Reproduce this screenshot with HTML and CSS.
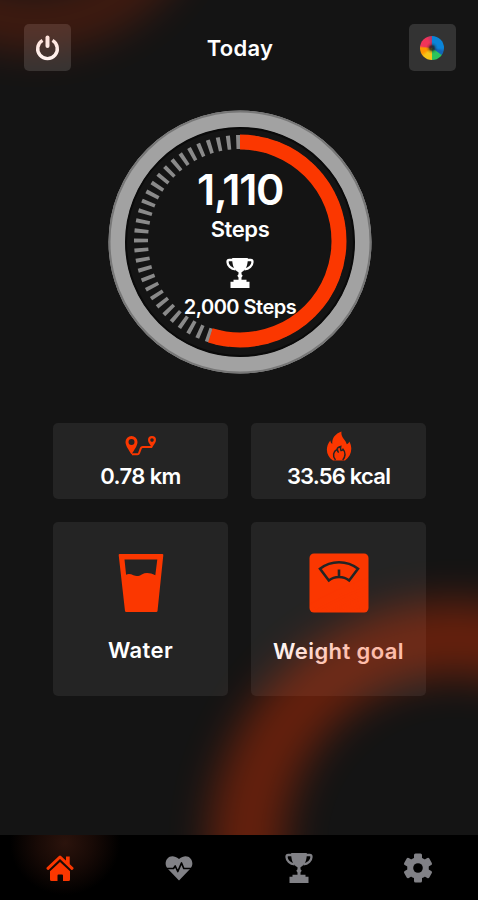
FILE: index.html
```html
<!DOCTYPE html>
<html lang="en">
    <head>
        <meta charset="UTF-8">
        <meta name="viewport" content="width=device-width, initial-scale=1.0">
        <title>Step Counter</title>
        <link rel="stylesheet" href="styles.css">
    </head>

    <body>
        <div class="app">
            <header class="header">
                <button class="icon-btn" type="button" aria-label="Power">
                    <svg width="26" height="26" viewBox="0 0 26 26" fill="none" stroke="#fff" stroke-width="3.4">
                        <path d="M7.500 5.400a9.800 9.800 0 1 0 10 0"/>
                        <path stroke-width="4" stroke-linecap="round" d="M12.500 2.500v8.500"/>
                    </svg>
                </button>
                <h1 class="title">Today</h1>
                <button class="icon-btn" type="button" aria-label="Theme">
                    <span class="wheel"></span>
                </button>
            </header>

            <section class="dial">
                <svg class="dial-ring" viewBox="0 0 264 264" fill="none">
                    <circle cx="132" cy="132" r="123" stroke="#a2a2a2" stroke-width="17"/>
                    <circle cx="132" cy="132" r="130.5" stroke="#777" stroke-width="2"/>
                    <circle cx="132" cy="132" r="114" stroke="#0a0a0a" stroke-width="2"/>
                    <circle class="ticks" cx="132" cy="131" r="99" pathLength="65"/>
                    <circle class="progress" cx="132" cy="131" r="99" pathLength="360"/>
                </svg>
                <div class="dial-text">
                    <p class="count">1,110</p>
                    <p class="unit">Steps</p>
                    <svg class="cup" width="28" height="31" viewBox="0 0 28 31"><use href="#trophy"/></svg>
                    <p class="target">2,000 Steps</p>
                </div>
            </section>

            <main class="cards">
                <div class="card small">
                    <svg width="32" height="22" viewBox="0 0 32 22" fill="none">
                        <path d="M7 19.2h5.4q1.3 0 1.7-1.2l1.7-4.6q.5-1.4 2-1.4H27" stroke="#fb3700" stroke-width="2"/>
                        <path fill="#fb3700" fill-rule="evenodd" d="M6.5 1a6 6 0 0 1 6 6c0 4-3.800 8.500-6 12.500C4.300 15.500.5 11 .5 7a6 6 0 0 1 6-6zm0 3.100a3 3 0 1 0 0 6 3 3 0 0 0 0-6zM27 1a4 4 0 0 1 4 4c0 2.600-2.500 5-4 8-1.500-3-4-5.400-4-8a4 4 0 0 1 4-4zm0 2.300a1.800 1.800 0 1 0 0 3.600 1.800 1.800 0 0 0 0-3.600z"/>
                    </svg>
                    <p>0.78 km</p>
                </div>
                <div class="card small kcal">
                    <svg width="26" height="30" viewBox="0 0 26 30">
                        <path fill="#fb3700" d="M15.500.500C8.500 3 5.800 8 6.300 13 5 12.300 4.500 11 4.300 9.500-1.500 17 .5 25 7 29.500h12c6.500-4.500 8-12.500 4.300-19-.5 1.300-1.300 2.300-2.500 2.700C20 9 14.500 6.500 15.500.500z"/>
                        <path fill="none" stroke="#242424" stroke-width="1.500" d="M9.500 29c-3.500-4-2-9 1.500-10.500.3-1.800 1.800-2.700 3.700-3-.5 1.700 0 3 .3 4 1 0 1.500-.4 2-1.200 3 3 2.500 7.700-.3 10.700M11.500 18.500c0 1.500.5 2.500 1.200 3"/>
                    </svg>
                    <p>33.56 kcal</p>
                </div>
                <div class="card big water">
                    <svg width="46" height="60" viewBox="0 0 46 60">
                        <path fill="#fb3700" fill-rule="evenodd" d="M1.700 1h42.600q1.200 0 1 1.200l-5.800 55.800q-.2 1-1.200 1H8.200q-1 0-1.200-1L.7 2.200Q.5 1 1.700 1zM6.500 6.500l1.600 15.300c2.400-1.300 5-.5 7.300.5 3.300 1.200 5.800.7 8.300-.9 4.500-2.300 8.600-1.500 13.600.9L39.300 6.500z"/>
                    </svg>
                    <p>Water</p>
                </div>
                <div class="card big weight">
                    <svg width="60" height="60" viewBox="0 0 60 60">
                        <rect x=".5" y=".5" width="59" height="59" rx="4.500" fill="#fb3700"/>
                        <path fill="none" stroke="#242424" stroke-width="2.600" d="M11 15.800C22 7 38 7 49 15.800l-8.800 11.700c-5.800-4.700-14.600-4.700-20.400 0zM30 16.500V24"/>
                    </svg>
                    <p>Weight goal</p>
                </div>
            </main>

            <div class="glow glow-top"></div>
            <div class="glow glow-bottom"></div>

            <nav class="nav">
                <a class="nav-item active">
                    <svg width="28" height="28" viewBox="0 0 28 28">
                        <path fill="none" stroke="#fb3700" stroke-width="3" stroke-linecap="round" stroke-linejoin="round" d="M2 14.300 14 3l12 11.300"/>
                        <path fill="#fb3700" d="M20 2.500h3.700V11L20 7.500zM14 8l10 9.300v8.200q0 1.500-1.500 1.500H17v-5.500q0-1-1-1h-3.500q-1 0-1 1V27H5.500Q4 27 4 25.500v-8.200z"/>
                    </svg>
                </a>
                <a class="nav-item">
                    <svg width="28" height="26" viewBox="0 0 28 26">
                        <path fill="#818186" d="M14 25.500 2.500 13.500C-3 7 4.500-4 14 4c9.500-8 17 3 11.500 9.500z"/>
                        <path fill="none" stroke="#000" stroke-width="1.700" stroke-linejoin="round" d="M0 13.500h8.500l1.700-2.500 2.600 5.500L16.500 8l2.300 5.500H28"/>
                    </svg>
                </a>
                <a class="nav-item">
                    <svg width="28" height="31" viewBox="0 0 28 31">
                        <g id="trophy" fill="currentColor">
                            <path fill="none" stroke="currentColor" stroke-width="2.300" d="M7.500 3H3.200Q1.500 3 1.500 5c0 3.500 3.500 7 8 7.300M20.500 3h4.300q1.700 0 1.700 2c0 3.500-3.500 7-8 7.300"/>
                            <path d="M6.200 1h15.600c.2 7-1.800 12-6.300 14.300v2l1.200 1.500-1.200 1.700v2.200h5v2H23.500V31h-19v-6.300h3v-2h5v-2.200l-1.200-1.700 1.200-1.500v-2C8 13 6 8 6.200 1z"/>
                        </g>
                    </svg>
                </a>
                <a class="nav-item">
                    <svg width="30" height="30" viewBox="0 0 30 30">
                        <g fill="#818186">
                            <rect x="11" y=".5" width="8" height="29" rx="1.500"/>
                            <rect x="11" y=".5" width="8" height="29" rx="1.500" transform="rotate(60 15 15)"/>
                            <rect x="11" y=".5" width="8" height="29" rx="1.500" transform="rotate(120 15 15)"/>
                            <circle cx="15" cy="15" r="10.800"/>
                        </g>
                        <circle cx="15" cy="15" r="4.800" fill="#000"/>
                    </svg>
                </a>
            </nav>
        </div>
    </body>
</html>
```
FILE: styles.css
```css
* {
    margin: 0;
    padding: 0;
    box-sizing: border-box;
}
body {
    background-color: #141414;
    color: white;
    font-family: Inter, "Liberation Sans", sans-serif;
    font-weight: 600;
}
.app {
    position: relative;
    width: 478px;
    height: 900px;
    margin: 0 auto;
    overflow: hidden;
    display: flex;
    flex-direction: column;
    background-color: #141414;
}
.header {
    display: flex;
    justify-content: space-between;
    align-items: center;
    padding: 24px 22px 0 24px;
}
.icon-btn {
    width: 47px;
    height: 47px;
    display: flex;
    align-items: center;
    justify-content: center;
    border: none;
    border-radius: 5px;
    background-color: #333;
}
.title {
    padding-top: 2px;
    font-size: 22px;
    font-weight: 600;
    line-height: 45px;
    letter-spacing: 0.3px;
}
.wheel {
    width: 24px;
    height: 24px;
    border-radius: 50%;
    background:
        radial-gradient(circle, #222c 0 2px, #2223 4px, transparent 6px),
        conic-gradient(#0a84d8 0 25%, #1266b8 30% 34%, #2cc45c 36% 50%, #f5c518 50% 62%, #ff9500 68% 75%, #f0345a 78% 92%, #b03a6c 100%);
}

/* step dial */
.dial {
    display: grid;
    width: 264px;
    height: 264px;
    margin: 39px 0 0 108px;
}
.dial-ring, .dial-text {
    grid-area: 1 / 1;
}
.ticks {
    stroke: #8a8a8a;
    stroke-width: 14;
    stroke-dasharray: 0.4 0.6;
    stroke-dashoffset: 0.4;
    transform: rotate(-90deg);
    transform-origin: 132px 131px;
}
.progress {
    stroke: #fb3700;
    stroke-width: 15;
    stroke-dasharray: 197.5 162.5;
    transform: rotate(-90deg);
    transform-origin: 132px 131px;
}
.dial-text {
    z-index: 1;
    display: flex;
    flex-direction: column;
    align-items: center;
    padding-top: 54px;
}
.count {
    font-size: 43px;
    line-height: 50px;
    letter-spacing: -1.4px;
}
.unit {
    font-size: 22px;
    line-height: 30px;
    letter-spacing: -0.4px;
}
.cup {
    margin: 13px 0 4px;
    color: white;
}
.target {
    font-size: 20px;
    line-height: 30px;
    letter-spacing: -0.5px;
}

/* stat cards */
.cards {
    display: grid;
    grid-template-columns: 175px 175px;
    grid-template-rows: 76px 174px;
    gap: 23px;
    margin: 49px 0 0 53px;
}
.card {
    display: flex;
    flex-direction: column;
    align-items: center;
    border-radius: 5px;
    background-color: #242424;
    font-size: 22px;
    line-height: 28px;
}
.small {
    padding-top: 12px;
    letter-spacing: -0.6px;
}
.small p {
    margin-top: 5px;
}
.kcal {
    padding-top: 8px;
    letter-spacing: -0.8px;
}
.kcal p {
    margin-top: 1px;
}
.big {
    padding-top: 31px;
    letter-spacing: 0.4px;
}
.big p {
    margin-top: 23px;
}
.weight p {
    margin-top: 24px;
}

/* blurred rings lying over the screen */
.glow {
    position: absolute;
    border-style: solid;
    border-color: #fb3700;
    border-radius: 50%;
    pointer-events: none;
}
.glow-top {
    left: -145px;
    top: -308px;
    width: 360px;
    height: 360px;
    border-width: 58px;
    opacity: 0.19;
    filter: blur(19px);
}
.glow-bottom {
    left: 210px;
    top: 601px;
    width: 490px;
    height: 490px;
    border-width: 74px;
    opacity: 0.35;
    filter: blur(20px);
}

.nav {
    position: relative;
    z-index: 2;
    display: grid;
    grid-template-columns: repeat(4, 1fr);
    height: 65px;
    margin-top: auto;
    background-color: black;
}
.nav-item {
    display: flex;
    align-items: center;
    justify-content: center;
    color: #818186;
}
.active {
    background: radial-gradient(ellipse 55px 52px at 65px 8px, #2b130c, #180a06 50%, transparent);
}
```
